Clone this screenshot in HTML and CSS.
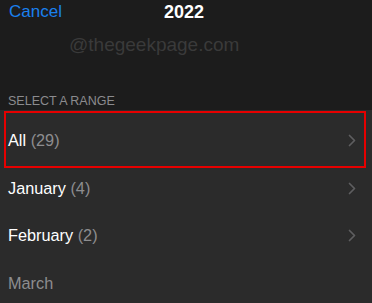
FILE: index.html
```html
<!DOCTYPE html>
<html>
<head>
<meta charset="utf-8">
<link rel="stylesheet" href="styles.css">
</head>
<body>
<div class="screen">
  <header class="nav">
    <span class="cancel">Cancel</span>
    <span class="title">2022</span>
    <span></span>
  </header>
  <div class="watermark">@thegeekpage.com</div>
  <div class="section-label">SELECT A RANGE</div>
  <ul class="list">
    <li class="row highlighted">
      <span class="name">All <span class="count">(29)</span></span>
      <svg class="chev" width="8" height="13" viewBox="0 0 8 13"><path d="M1.5 1.5 L6.5 6.5 L1.5 11.5" fill="none" stroke="#5e5e60" stroke-width="1.7" stroke-linecap="round" stroke-linejoin="round"/></svg>
    </li>
    <li class="row">
      <span class="name">January <span class="count">(4)</span></span>
      <svg class="chev" width="8" height="13" viewBox="0 0 8 13"><path d="M1.5 1.5 L6.5 6.5 L1.5 11.5" fill="none" stroke="#5e5e60" stroke-width="1.7" stroke-linecap="round" stroke-linejoin="round"/></svg>
    </li>
    <li class="row">
      <span class="name">February <span class="count">(2)</span></span>
      <svg class="chev" width="8" height="13" viewBox="0 0 8 13"><path d="M1.5 1.5 L6.5 6.5 L1.5 11.5" fill="none" stroke="#5e5e60" stroke-width="1.7" stroke-linecap="round" stroke-linejoin="round"/></svg>
    </li>
    <li class="row">
      <span class="name disabled">March</span>
    </li>
  </ul>
</div>
</body>
</html>
```

FILE: styles.css
```css
html, body {
  margin: 0;
  padding: 0;
  background: #1c1c1c;
}
.screen {
  width: 372px;
  height: 303px;
  overflow: hidden;
  background: #1c1c1c;
  font-family: "Liberation Sans", Arial, sans-serif;
}
.nav {
  height: 24px;
  display: grid;
  grid-template-columns: 1fr auto 1fr;
  align-items: center;
  padding: 0 9px;
  line-height: 24px;
}
.cancel {
  color: #1a80ee;
  font-size: 17px;
}
.title {
  color: #ffffff;
  font-size: 18px;
  font-weight: bold;
  margin-right: 4px;
}
.watermark {
  margin-top: 10px;
  padding-left: 69px;
  height: 22px;
  line-height: 22px;
  font-size: 19px;
  color: #3a3a3a;
}
.section-label {
  margin-top: 38px;
  height: 16px;
  padding-left: 8px;
  font-size: 12.5px;
  line-height: 15px;
  color: #8b8b8e;
}
.list {
  list-style: none;
  margin: 0;
  padding: 7px 0 0 0;
  background: #2b2b2b;
  height: 200px;
}
.row {
  position: relative;
  height: 47.6px;
  display: flex;
  align-items: center;
  justify-content: space-between;
  padding: 0 16px 0 8px;
  font-size: 16.3px;
  color: #ffffff;
}
.count {
  color: #8d8d8f;
}
.disabled {
  color: #8d8d8f;
}
.chev {
  display: block;
}
.highlighted::after {
  content: "";
  position: absolute;
  left: 4px;
  top: -6px;
  width: 358px;
  height: 53px;
  border: 2px solid #e60000;
}
```
